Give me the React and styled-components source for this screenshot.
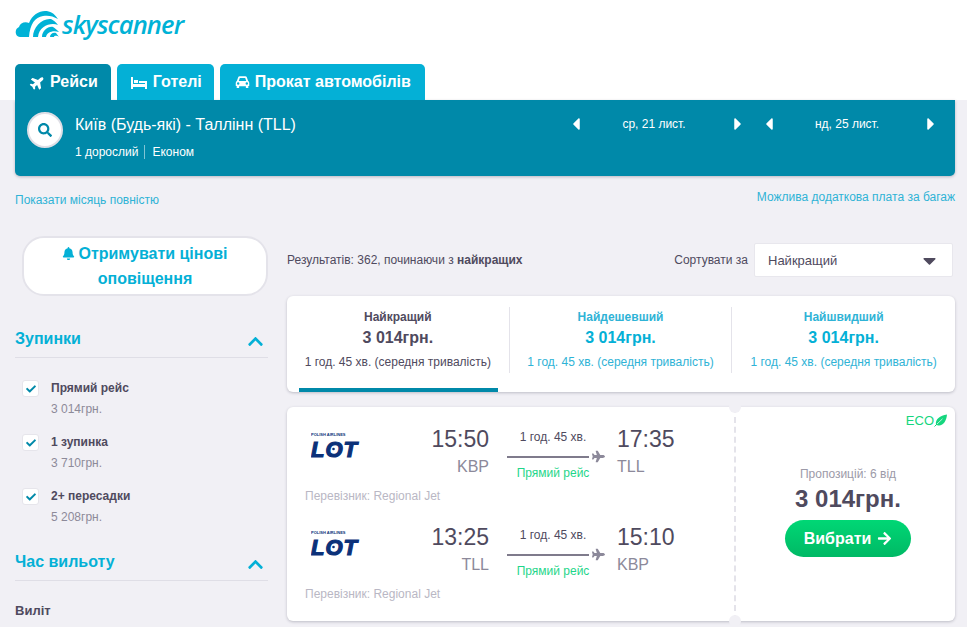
import React from "react";
import styled, { createGlobalStyle } from "styled-components";
import {
  FaPlane,
  FaSearch,
  FaBell,
  FaCheck,
  FaChevronUp,
  FaArrowRight,
  FaCaretLeft,
  FaCaretRight,
  FaCaretDown,
} from "react-icons/fa";

const GlobalStyle = createGlobalStyle`
  html, body {
    margin: 0;
    height: 100%;
    overflow: hidden;
    background: #f1f0f5;
    font-family: "Liberation Sans", Arial, sans-serif;
    color: #4f4a5e;
  }
  * { box-sizing: border-box; }
`;

const Header = styled.header`
  height: 100px;
  background: #fff;
  padding: 10px 0 0 15px;
  display: flex;
  flex-direction: column;
  justify-content: space-between;
`;

const LogoRow = styled.div`
  display: flex;
  align-items: flex-start;
  gap: 1px;
  height: 30px;
`;

const LogoText = styled.span`
  font-family: "Open Sans", sans-serif;
  font-style: italic;
  font-weight: 600;
  font-size: 25.5px;
  line-height: 29px;
  letter-spacing: -0.85px;
  color: #00b2d6;
`;

const Tabs = styled.nav`
  display: flex;
  gap: 6px;
`;

const Tab = styled.div`
  height: 36px;
  padding: 0 ${(p) => p.$right}px 0 ${(p) => p.$left}px;
  display: flex;
  align-items: center;
  gap: ${(p) => p.$gap}px;
  border-radius: 5px 5px 0 0;
  background: ${(p) => (p.$active ? "#0089a9" : "#04b0d6")};
  color: #fff;
  font-size: 16px;
  font-weight: 700;
  svg {
    font-size: 15px;
  }
`;

const PlaneUp = styled(FaPlane)`
  transform: rotate(-40deg);
`;

const BedIcon = () => (
  <svg width="16" height="13" viewBox="0 0 16 13">
    <rect x="0" y="1" width="2" height="12" fill="#fff" />
    <rect x="3" y="4" width="4" height="3" fill="#fff" />
    <rect x="8" y="5" width="6" height="2" fill="#fff" />
    <rect x="2" y="8" width="12" height="3" fill="#fff" />
    <rect x="14" y="5" width="2" height="8" fill="#fff" />
  </svg>
);

const CarIcon = () => (
  <svg width="15" height="14" viewBox="0 0 16 14">
    <path
      fillRule="evenodd"
      fill="#fff"
      d="M2 6 L3.5 1.6 Q3.9 0.8 5 0.8 H11 Q12.1 0.8 12.5 1.6 L14 6 Q15.2 6.6 15.2 8 V11.2 H14.2 V13.4 H11.6 V11.6 H4.4 V13.4 H1.8 V11.2 H0.8 V8 Q0.8 6.6 2 6 Z M4 6 H12 L10.9 2.7 H5.1 Z M3.4 7.3 A1.3 1.3 0 1 0 3.4 9.9 A1.3 1.3 0 1 0 3.4 7.3 Z M12.6 7.3 A1.3 1.3 0 1 0 12.6 9.9 A1.3 1.3 0 1 0 12.6 7.3 Z"
    />
  </svg>
);

const LeafIcon = () => (
  <svg width="13" height="13" viewBox="0 0 13 13">
    <path d="M2 11 C1 5 6 1.5 13 0.5 C12.5 7 9 12.5 3.5 11.2 Z" fill="#15d67e" />
    <path d="M0.5 12.5 L8 5" stroke="#15d67e" strokeWidth="1" />
    <path d="M3 10 L8.5 4.8" stroke="#fff" strokeWidth="0.7" />
  </svg>
);

const SearchBar = styled.section`
  margin: 0 12px 0 15px;
  height: 76px;
  background: #0089a9;
  border-radius: 0 0 5px 5px;
  box-shadow: 0 1px 3px rgba(80, 80, 100, 0.35);
  padding: 12px 0 0 12px;
  display: flex;
  color: #fff;
`;

const SearchCircle = styled.div`
  width: 36px;
  height: 36px;
  border-radius: 50%;
  background: #fff;
  border: 2px solid #dfdfe6;
  color: #0089a9;
  display: flex;
  align-items: center;
  justify-content: center;
  font-size: 14px;
  flex: none;
`;

const SearchInfo = styled.div`
  margin-left: 12px;
  width: 491px;
  flex: none;
`;

const Route = styled.div`
  font-size: 16px;
  line-height: 22px;
  margin-top: 2px;
`;

const Passengers = styled.div`
  display: flex;
  align-items: center;
  margin-top: 9px;
  font-size: 12px;
  line-height: 14px;
`;

const PassengerItem = styled.span`
  padding-right: 6px;
  margin-right: 7px;
  border-right: ${(p) => (p.$sep ? "1px solid rgba(255,255,255,0.5)" : "none")};
`;

const DatePicker = styled.div`
  display: flex;
  align-items: center;
  justify-content: space-between;
  flex: none;
  width: 182px;
  height: 22px;
  margin: 1px 11px 0 0;
  font-size: 12px;
  svg {
    font-size: 20px;
  }
`;

const DateText = styled.span`
  margin-right: 6px;
`;

const LinksRow = styled.div`
  margin: 14px 12px 0 15px;
  display: flex;
  justify-content: space-between;
  font-size: 12px;
  line-height: 14px;
  color: #2fb3d6;
`;

const LinkLeft = styled.span`
  margin-top: 3px;
`;

const Body = styled.div`
  display: grid;
  grid-template-columns: 253px 668px;
  column-gap: 19px;
  margin: 25px 0 0 15px;
`;

const Sidebar = styled.aside`
  display: flex;
  flex-direction: column;
`;

const AlertButton = styled.div`
  margin: 4px 0 0 7px;
  width: 246px;
  height: 60px;
  background: #fff;
  border: 2px solid #e4e3ea;
  border-radius: 22px;
  text-align: center;
  color: #04b0d6;
  font-size: 16px;
  font-weight: 700;
  line-height: 25px;
  padding-top: 3px;
  svg {
    font-size: 13px;
    vertical-align: -1px;
    margin-right: 3px;
  }
`;

const FilterHead = styled.div`
  margin-top: ${(p) => p.$top}px;
  height: 32px;
  display: flex;
  justify-content: space-between;
  align-items: center;
  padding: 0 4px 5px 0;
  border-bottom: 1px solid #dfdee6;
  color: #04b0d6;
  font-size: 16px;
  font-weight: 700;
  svg {
    font-size: 17px;
    margin-top: 4px;
  }
`;

const FilterList = styled.div`
  padding: 23px 0 0 7px;
  display: flex;
  flex-direction: column;
  gap: 19px;
`;

const FilterItem = styled.div`
  display: grid;
  grid-template-columns: 29px 1fr;
`;

const CheckBox = styled.div`
  width: 17px;
  height: 17px;
  margin-top: -1px;
  background: #fff;
  border: 1px solid #e6e5eb;
  border-radius: 3px;
  color: #0089a9;
  font-size: 10px;
  display: flex;
  align-items: center;
  justify-content: center;
`;

const FilterLabel = styled.div`
  font-size: 12px;
  line-height: 14px;
  font-weight: 700;
`;

const FilterPrice = styled.div`
  margin-top: 7px;
  font-size: 12px;
  line-height: 14px;
  color: #8d8a99;
`;

const SubLabel = styled.div`
  margin-top: 22px;
  font-size: 13px;
  font-weight: 700;
  line-height: 15px;
`;

const Main = styled.main`
  display: flex;
  flex-direction: column;
`;

const SortRow = styled.div`
  display: flex;
  align-items: center;
  height: 34px;
  margin-top: 11px;
  width: 666px;
  font-size: 12px;
`;

const ResultCount = styled.div`
  flex: 1;
`;

const SortLabel = styled.span`
  margin-right: 6px;
`;

const Select = styled.div`
  width: 199px;
  height: 34px;
  background: #fff;
  border: 1px solid #e8e7ed;
  border-radius: 2px;
  padding: 0 12px 0 13px;
  display: flex;
  align-items: center;
  justify-content: space-between;
  font-size: 13px;
  svg {
    font-size: 21px;
  }
`;

const Card = styled.div`
  background: #fff;
  border-radius: 6px;
  box-shadow: 0 1px 3px rgba(70, 70, 90, 0.3);
`;

const SortCard = styled(Card)`
  margin-top: 19px;
  height: 96px;
  display: grid;
  grid-template-columns: repeat(3, 1fr);
`;

const SortTab = styled.div`
  padding-top: 11px;
  text-align: center;
  color: ${(p) => (p.$active ? "#4f4a5e" : "#2fb3d6")};
`;

const SortCell = styled.div`
  height: 66px;
  padding-top: 3px;
  border-right: ${(p) => (p.$last ? "none" : "1px solid #e4e3ea")};
`;

const SortBar = styled.div`
  height: 4px;
  margin: 15px 12px 0;
  background: ${(p) => (p.$active ? "#0089a9" : "transparent")};
`;

const SortName = styled.div`
  font-size: 12px;
  font-weight: 700;
  line-height: 14px;
`;

const SortPrice = styled.div`
  font-size: 16px;
  font-weight: 700;
  line-height: 18px;
  margin-top: 5px;
  color: ${(p) => (p.$active ? "#4f4a5e" : "#04b0d6")};
`;

const SortTime = styled.div`
  font-size: 12px;
  line-height: 14px;
  margin-top: 8px;
`;

const ResultCard = styled(Card)`
  margin-top: 15px;
  height: 214px;
  display: flex;
  position: relative;
`;

const Legs = styled.div`
  width: 447px;
  padding: 13px 0 0 18px;
  display: flex;
  flex-direction: column;
  gap: 14px;
`;

const Leg = styled.div`
  height: 84px;
`;

const LegRow = styled.div`
  display: grid;
  grid-template-columns: 105px 79px 128px 1fr;
  height: 62px;
`;

const LotLogo = styled.svg`
  display: block;
  margin: 11px 0 0 6px;
`;

const Stamp = styled.div`
  text-align: ${(p) => p.$align};
`;

const Time = styled.div`
  font-size: 23px;
  line-height: 28px;
  padding-top: 5px;
`;

const Airport = styled.div`
  font-size: 16px;
  line-height: 18px;
  margin-top: 5px;
  color: #8c899a;
`;

const Middle = styled.div`
  width: 92px;
  text-align: center;
  margin-left: 18px;
`;

const DurationText = styled.div`
  font-size: 12px;
  line-height: 14px;
  padding-top: 10px;
`;

const Line = styled.div`
  position: relative;
  height: 2px;
  width: 82px;
  margin-top: 12px;
  background: #7f7b8c;
`;

const LinePlane = styled(FaPlane)`
  position: absolute;
  left: 85px;
  top: -6px;
  font-size: 13px;
  color: #8c899a;
`;

const Direct = styled.div`
  font-size: 12px;
  line-height: 14px;
  margin-top: 8px;
  color: #1fd68a;
`;

const Carrier = styled.div`
  font-size: 12px;
  line-height: 14px;
  margin-top: 7px;
  color: #b9b7c4;
`;

const PriceCol = styled.div`
  flex: 1;
  border-left: 2px dashed #e4e3ea;
  position: relative;
  display: flex;
  flex-direction: column;
  align-items: center;
  padding: 60px 0 0 5px;
`;

const Notch = styled.span`
  position: absolute;
  left: -7px;
  ${(p) => (p.$bottom ? "bottom: -6px;" : "top: -6px;")}
  width: 12px;
  height: 12px;
  border-radius: 50%;
  background: #f1f0f5;
`;

const Eco = styled.div`
  position: absolute;
  top: 6px;
  right: 8px;
  display: flex;
  align-items: center;
  color: #15d67e;
  font-size: 13px;
`;

const Offers = styled.div`
  font-size: 12px;
  line-height: 14px;
  color: #9c9aa8;
`;

const BigPrice = styled.div`
  font-size: 24px;
  font-weight: 700;
  line-height: 26px;
  margin-top: 5px;
`;

const SelectButton = styled.div`
  margin-top: 8px;
  width: 126px;
  height: 37px;
  border-radius: 19px;
  background: linear-gradient(#00d775, #00b965);
  color: #fff;
  font-size: 16px;
  font-weight: 700;
  display: flex;
  align-items: center;
  justify-content: center;
  gap: 6px;
  svg {
    font-size: 15px;
  }
`;

const Cloud = () => (
  <svg width="46" height="28" viewBox="0 0 46 28">
    <g fill="#00b2d6">
      <path d="M5 27 C0 27 -1 19 4 17 C5 13 10 11 14 13 C17 5 24 1 30 1 C35 1 39 3 43 9 C38 6 33 5 28 6 C20 7 15 14 14 27 Z" />
      <path d="M18 27 C18 17 27 8 36 9 C38 10 41 12 43 15 C36 12 24 16 23 27 Z" />
      <path d="M27 27 C27 21 33 16 38 17 C40 18 42 20 44 22 C38 20 32 22 31 27 Z" />
      <path d="M35 27 C35 24 38 22 41 23 L44 27 C41 25 39 26 39 27 Z" />
    </g>
  </svg>
);

const Lot = () => (
  <LotLogo width="50" height="34" viewBox="0 0 50 34">
    <text x="0" y="5" fontSize="4" fontWeight="700" fill="#0b3179">
      POLISH AIRLINES
    </text>
    <text
      x="0"
      y="26"
      fontSize="22"
      fontWeight="700"
      fontStyle="italic"
      letterSpacing="1"
      fill="#0b3179"
      stroke="#0b3179"
      strokeWidth="1.2"
    >
      LOT
    </text>
    <circle cx="22.5" cy="18" r="1.3" fill="#0b3179" />
  </LotLogo>
);

const legs = [
  { dep: "15:50", from: "KBP", arr: "17:35", to: "TLL" },
  { dep: "13:25", from: "TLL", arr: "15:10", to: "KBP" },
];

const sortTabs = [
  { name: "Найкращий", active: true },
  { name: "Найдешевший" },
  { name: "Найшвидший", last: true },
];

const stops = [
  { name: "Прямий рейс", price: "3 014грн." },
  { name: "1 зупинка", price: "3 710грн." },
  { name: "2+ пересадки", price: "5 208грн." },
];

const App = () => (
  <>
    <GlobalStyle />
    <Header>
      <LogoRow>
        <Cloud />
        <LogoText>skyscanner</LogoText>
      </LogoRow>
      <Tabs>
        <Tab $active $left={15} $right={13} $gap={5}>
          <PlaneUp /> Рейси
        </Tab>
        <Tab $left={14} $right={12} $gap={6}>
          <BedIcon /> Готелі
        </Tab>
        <Tab $left={15} $right={14} $gap={5}>
          <CarIcon /> Прокат автомобілів
        </Tab>
      </Tabs>
    </Header>
    <SearchBar>
      <SearchCircle>
        <FaSearch />
      </SearchCircle>
      <SearchInfo>
        <Route>Київ (Будь-які) - Таллінн (TLL)</Route>
        <Passengers>
          <PassengerItem $sep>1 дорослий</PassengerItem>
          <PassengerItem>Економ</PassengerItem>
        </Passengers>
      </SearchInfo>
      <DatePicker>
        <FaCaretLeft />
        <DateText>ср, 21 лист.</DateText>
        <FaCaretRight />
      </DatePicker>
      <DatePicker>
        <FaCaretLeft />
        <DateText>нд, 25 лист.</DateText>
        <FaCaretRight />
      </DatePicker>
    </SearchBar>
    <LinksRow>
      <LinkLeft>Показати місяць повністю</LinkLeft>
      <span>Можлива додаткова плата за багаж</span>
    </LinksRow>
    <Body>
      <Sidebar>
        <AlertButton>
          <FaBell />
          Отримувати цінові оповіщення
        </AlertButton>
        <FilterHead $top={30}>
          Зупинки
          <FaChevronUp />
        </FilterHead>
        <FilterList>
          {stops.map((s) => (
            <FilterItem key={s.name}>
              <CheckBox>
                <FaCheck />
              </CheckBox>
              <div>
                <FilterLabel>{s.name}</FilterLabel>
                <FilterPrice>{s.price}</FilterPrice>
              </div>
            </FilterItem>
          ))}
        </FilterList>
        <FilterHead $top={25}>
          Час вильоту
          <FaChevronUp />
        </FilterHead>
        <SubLabel>Виліт</SubLabel>
      </Sidebar>
      <Main>
        <SortRow>
          <ResultCount>
            Результатів: 362, починаючи з <b>найкращих</b>
          </ResultCount>
          <SortLabel>Сортувати за</SortLabel>
          <Select>
            Найкращий
            <FaCaretDown />
          </Select>
        </SortRow>
        <SortCard>
          {sortTabs.map((t) => (
            <SortTab key={t.name} $active={t.active}>
              <SortCell $last={t.last}>
                <SortName>{t.name}</SortName>
                <SortPrice $active={t.active}>3 014грн.</SortPrice>
                <SortTime>1 год. 45 хв. (середня тривалість)</SortTime>
              </SortCell>
              <SortBar $active={t.active} />
            </SortTab>
          ))}
        </SortCard>
        <ResultCard>
          <Legs>
            {legs.map((l) => (
              <Leg key={l.dep}>
                <LegRow>
                  <Lot />
                  <Stamp $align="right">
                    <Time>{l.dep}</Time>
                    <Airport>{l.from}</Airport>
                  </Stamp>
                  <Middle>
                    <DurationText>1 год. 45 хв.</DurationText>
                    <Line>
                      <LinePlane />
                    </Line>
                    <Direct>Прямий рейс</Direct>
                  </Middle>
                  <Stamp $align="left">
                    <Time>{l.arr}</Time>
                    <Airport>{l.to}</Airport>
                  </Stamp>
                </LegRow>
                <Carrier>Перевізник: Regional Jet</Carrier>
              </Leg>
            ))}
          </Legs>
          <PriceCol>
            <Notch />
            <Notch $bottom />
            <Eco>
              ECO
              <LeafIcon />
            </Eco>
            <Offers>Пропозицій: 6 від</Offers>
            <BigPrice>3 014грн.</BigPrice>
            <SelectButton>
              Вибрати <FaArrowRight />
            </SelectButton>
          </PriceCol>
        </ResultCard>
      </Main>
    </Body>
  </>
);

export default App;
